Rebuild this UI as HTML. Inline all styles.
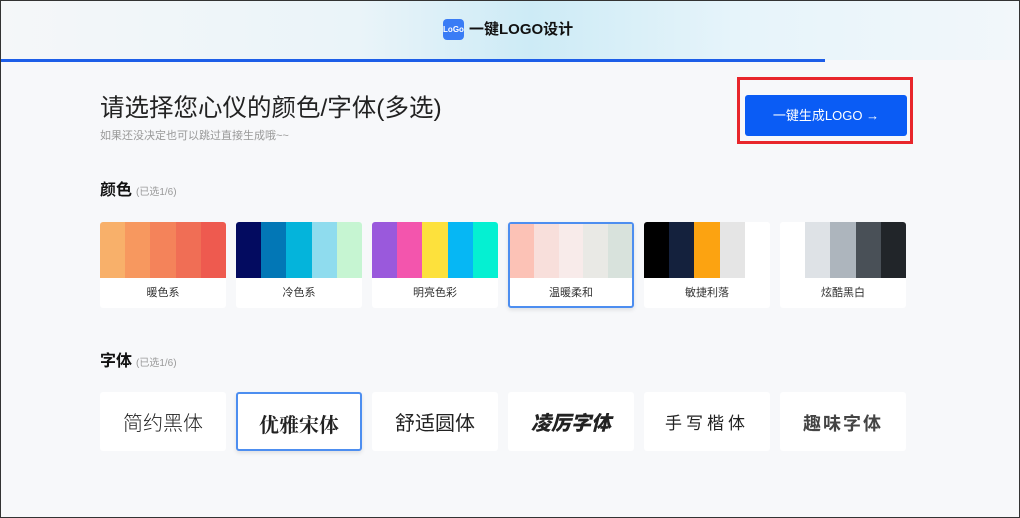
<!DOCTYPE html>
<html><head><meta charset="utf-8"><style>
*{margin:0;padding:0;box-sizing:border-box}
body{width:1020px;height:518px;overflow:hidden;background:#f7f8fa;font-family:"Liberation Sans","Noto Sans CJK SC",sans-serif;position:relative}
.frame{position:absolute;left:0;top:0;width:1020px;height:518px;border:1px solid #333;pointer-events:none}
.hdr{position:absolute;left:0;top:0;width:1020px;height:60px;background:linear-gradient(90deg,#f5f7f9 0%,#eaf4f9 35%,#cdebf6 52%,#e6f4fa 72%,#f2f7fa 100%)}
.logo{position:absolute;left:443px;top:19px;width:21px;height:21px;background:#3a7cf5;border-radius:4px;color:#fff;font-size:8px;font-weight:bold;text-align:center;line-height:21px}
.ttl{position:absolute;left:469px;top:18px;font-size:15px;font-weight:bold;color:#111}
.bar{position:absolute;left:0;top:59px;width:825px;height:3px;background:#1d5ee8}
h1{position:absolute;left:100px;top:89px;font-size:24.5px;font-weight:normal;color:#222}
.sub{position:absolute;left:100px;top:127px;font-size:11px;color:#999}
.rb{position:absolute;left:737px;top:77px;width:176px;height:67px;border:3px solid #e8262b}
.btn{position:absolute;left:745px;top:95px;width:162px;height:41px;background:#0a5cf5;border-radius:3px;color:#fff;font-size:13px;text-align:center;line-height:41px}
.sec{position:absolute;left:100px;font-size:16px;font-weight:bold;color:#111}
.sec span{font-size:10px;font-weight:normal;color:#999;margin-left:4px}
.card{position:absolute;width:126px;background:#fff;border-radius:3px;overflow:hidden}
.cc{top:222px;height:86px}
.sw{display:flex;height:56px}.sw i{flex:1}
.lb{text-align:center;font-size:11px;color:#333;line-height:30px}
.sel{border:2px solid #4d8ef0;box-shadow:0 2px 4px rgba(0,0,0,.1)}
.fc{top:392px;height:59px;text-align:center;line-height:64px;font-size:20px;color:#222}
</style></head><body>
<div class="hdr"></div>
<div class="logo">LoGo</div>
<div class="ttl">一键LOGO设计</div>
<div class="bar"></div>
<h1>请选择您心仪的颜色/字体(多选)</h1>
<div class="sub">如果还没决定也可以跳过直接生成哦~~</div>
<div class="rb"></div>
<div class="btn">一键生成LOGO →</div>
<div class="sec" style="top:176px">颜色<span>(已选1/6)</span></div>
<div class="card cc" style="left:100px"><div class="sw"><i style="background:#f8b06a"></i><i style="background:#f7985f"></i><i style="background:#f4835a"></i><i style="background:#f06e55"></i><i style="background:#ee5a4f"></i></div><div class="lb">暖色系</div></div>
<div class="card cc" style="left:236px"><div class="sw"><i style="background:#030b60"></i><i style="background:#0277b6"></i><i style="background:#04b4db"></i><i style="background:#8fdcee"></i><i style="background:#c6f5d2"></i></div><div class="lb">冷色系</div></div>
<div class="card cc" style="left:372px"><div class="sw"><i style="background:#9a59dc"></i><i style="background:#f355ad"></i><i style="background:#fde13c"></i><i style="background:#06b7f4"></i><i style="background:#05f0d2"></i></div><div class="lb">明亮色彩</div></div>
<div class="card cc sel" style="left:508px"><div class="sw" style="height:54px"><i style="background:#fcc2b6"></i><i style="background:#f8dfdb"></i><i style="background:#f8ebea"></i><i style="background:#e9e9e5"></i><i style="background:#d8e2dc"></i></div><div class="lb">温暖柔和</div></div>
<div class="card cc" style="left:644px"><div class="sw"><i style="background:#000"></i><i style="background:#14213d"></i><i style="background:#fca311"></i><i style="background:#e5e5e5"></i><i style="background:#fff"></i></div><div class="lb">敏捷利落</div></div>
<div class="card cc" style="left:780px"><div class="sw"><i style="background:#fff"></i><i style="background:#dee2e6"></i><i style="background:#adb5bd"></i><i style="background:#495057"></i><i style="background:#212529"></i></div><div class="lb">炫酷黑白</div></div>
<div class="sec" style="top:347px">字体<span>(已选1/6)</span></div>
<div class="card fc" style="left:100px;font-weight:300">简约黑体</div>
<div class="card fc sel" style="left:236px;font-family:'Noto Serif CJK SC',serif;font-weight:bold;line-height:60px">优雅宋体</div>
<div class="card fc" style="left:372px">舒适圆体</div>
<div class="card fc" style="left:508px;font-weight:900;font-style:italic">凌厉字体</div>
<div class="card fc" style="left:644px;font-size:17px;letter-spacing:4px">手写楷体</div>
<div class="card fc" style="left:780px;font-size:18px;letter-spacing:2px;color:#444;font-weight:bold">趣味字体</div>
<div class="frame"></div>
</body></html>
